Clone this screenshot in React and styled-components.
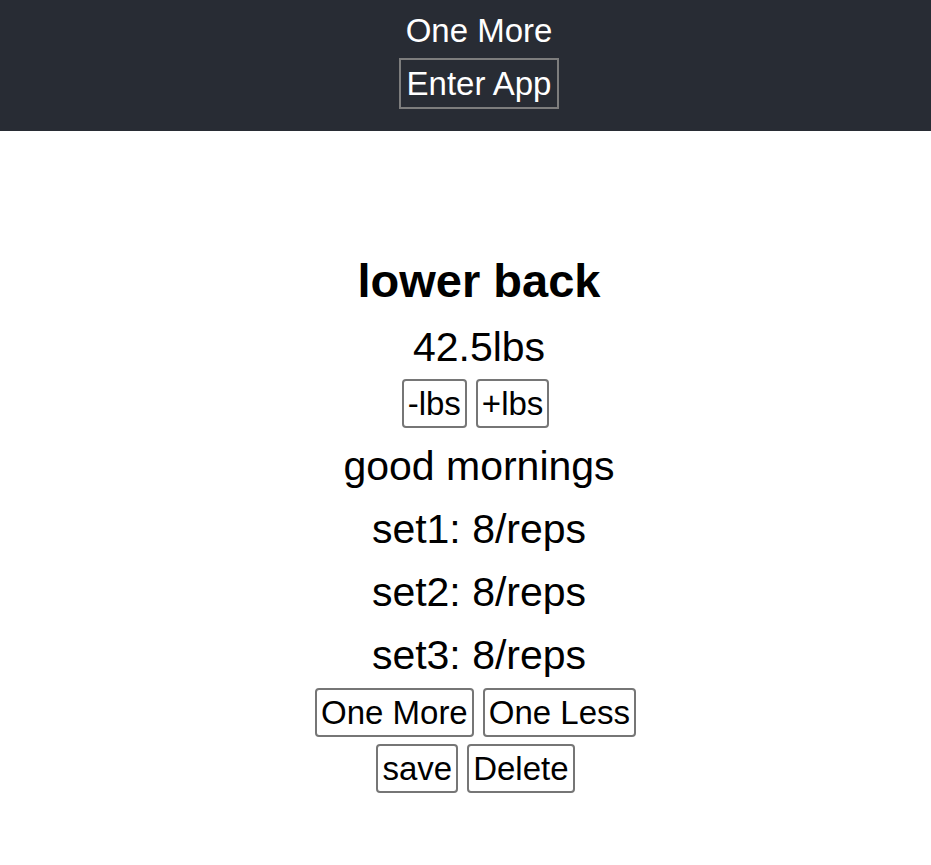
import React from "react";
import styled, { createGlobalStyle } from "styled-components";

const Global = createGlobalStyle`
  html, body { margin: 0; padding: 0; background: #fff; }
  body { font-family: "Liberation Sans", Arial, Helvetica, sans-serif; -webkit-font-smoothing: antialiased; }
`;

const Header = styled.header`
  background: #282c34;
  height: 131px;
  box-sizing: border-box;
  padding: 11px 0 0 27px;
  display: flex;
  flex-direction: column;
  align-items: center;
  color: #fff;
`;

const Brand = styled.div`
  font-size: 33px;
  line-height: 40px;
  height: 40px;
  margin-bottom: 7px;
`;

const EnterButton = styled.button`
  font-family: inherit;
  font-size: 33px;
  height: 51px;
  padding: 0 6px;
  background: transparent;
  color: #fff;
  border: 2px solid #7d7d7d;
  border-radius: 0;
  cursor: pointer;
`;

const Main = styled.main`
  padding: 115px 0 0 27px;
  display: flex;
  flex-direction: column;
  align-items: center;
  color: #000;
`;

const Title = styled.h1`
  margin: 0;
  font-size: 47px;
  font-weight: 700;
  line-height: 70px;
  height: 70px;
`;

const Line = styled.div`
  font-size: 41px;
  line-height: 63px;
  height: 63px;
  margin-bottom: ${(p) => p.$gap || 0}px;
`;

const Row = styled.div`
  display: flex;
  gap: 9px;
  justify-content: center;
  padding-right: 7px;
  margin-bottom: ${(p) => p.$gap || 0}px;
`;

const Btn = styled.button`
  font-family: inherit;
  font-size: 33px;
  height: 49px;
  padding: 0 4px;
  background: #fff;
  color: #000;
  border: 2px solid #767676;
  border-radius: 4px;
  cursor: pointer;
`;

export default function App() {
  return (
    <>
      <Global />
      <Header>
        <Brand>One More</Brand>
        <EnterButton>Enter App</EnterButton>
      </Header>
      <Main>
        <Title>lower back</Title>
        <Line $gap={0}>42.5lbs</Line>
        <Row $gap={7}>
          <Btn>-lbs</Btn>
          <Btn>+lbs</Btn>
        </Row>
        <Line>good mornings</Line>
        <Line>set1: 8/reps</Line>
        <Line>set2: 8/reps</Line>
        <Line $gap={1}>set3: 8/reps</Line>
        <Row $gap={7}>
          <Btn>One More</Btn>
          <Btn>One Less</Btn>
        </Row>
        <Row>
          <Btn>save</Btn>
          <Btn>Delete</Btn>
        </Row>
      </Main>
    </>
  );
}
